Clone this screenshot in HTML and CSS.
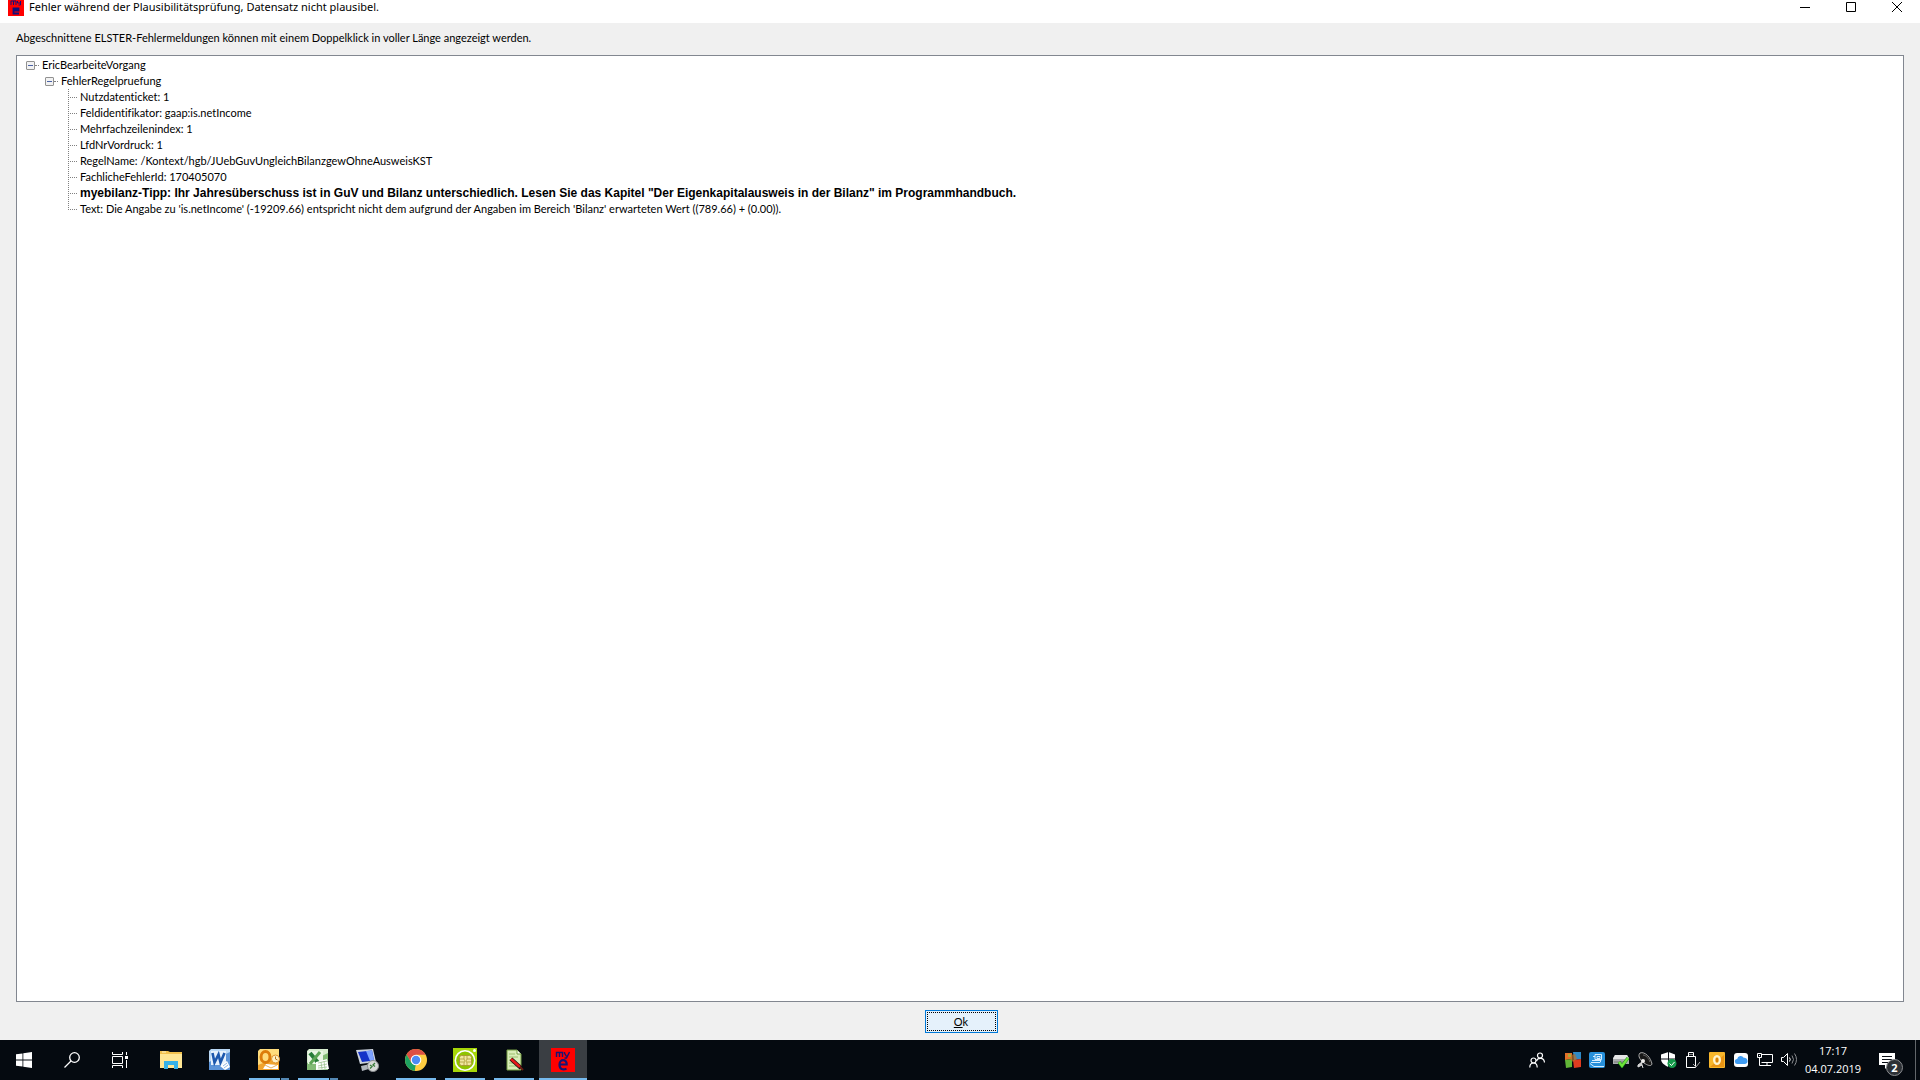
FILE: index.html
```html
<!DOCTYPE html>
<html lang="de">
<head>
<meta charset="utf-8">
<title>Fehler während der Plausibilitätsprüfung</title>
<link rel="stylesheet" href="styles.css">
</head>
<body>
<header class="titlebar">
  <svg class="app-icon" viewBox="0 0 16 16"><rect width="16" height="16" fill="#f00"/><g fill="none" stroke="#10107c"><path d="M3 5V1h5v4M5.500 1v4M9.500 1v2h3M12.500 1v4h-2" stroke-width="1"/><path d="M5.500 10.500h5v-2h-5v5h5.500" stroke-width="1.800"/></g></svg>
  <h1 class="title">Fehler während der Plausibilitätsprüfung, Datensatz nicht plausibel.</h1>
  <div class="controls">
    <button class="control" aria-label="Minimieren"><svg viewBox="0 0 10 10"><path d="M0 5.500h10"/></svg></button>
    <button class="control" aria-label="Maximieren"><svg viewBox="0 0 10 10"><path d="M.5.500h9v9h-9z"/></svg></button>
    <button class="control" aria-label="Schließen"><svg viewBox="0 0 10 10"><path d="M0 0l10 10M10 0L0 10"/></svg></button>
  </div>
</header>
<main class="dialog">
  <p class="hint">Abgeschnittene ELSTER-Fehlermeldungen können mit einem Doppelklick in voller Länge angezeigt werden.</p>
  <section class="tree">
    <ul class="level">
      <li>
        <div class="row"><button class="toggle" aria-label="Zuklappen"></button><span class="link"></span>EricBearbeiteVorgang</div>
        <ul class="level nested">
          <li>
            <div class="row"><button class="toggle" aria-label="Zuklappen"></button><span class="link"></span>FehlerRegelpruefung</div>
            <ul class="level leaves">
              <li class="row leaf">Nutzdatenticket: 1</li>
              <li class="row leaf">Feldidentifikator: gaap:is.netIncome</li>
              <li class="row leaf">Mehrfachzeilenindex: 1</li>
              <li class="row leaf">LfdNrVordruck: 1</li>
              <li class="row leaf">RegelName: /Kontext/hgb/JUebGuvUngleichBilanzgewOhneAusweisKST</li>
              <li class="row leaf">FachlicheFehlerId: 170405070</li>
              <li class="row leaf tip">myebilanz-Tipp: Ihr Jahresüberschuss ist in GuV und Bilanz unterschiedlich. Lesen Sie das Kapitel "Der Eigenkapitalausweis in der Bilanz" im Programmhandbuch.</li>
              <li class="row leaf">Text: Die Angabe zu 'is.netIncome' (-19209.66) entspricht nicht dem aufgrund der Angaben im Bereich 'Bilanz' erwarteten Wert ((789.66) + (0.00)).</li>
            </ul>
          </li>
        </ul>
      </li>
    </ul>
  </section>
  <div class="actions"><button class="ok"><span class="focus"><u>O</u>k</span></button></div>
</main>
<footer class="taskbar">
  <nav class="system">
    <button class="task" aria-label="Start"><svg width="16" height="16" viewBox="0 0 16 16" fill="#fff"><path d="M0 2.300l6.500-.9v6.200H0zM7.300 1.300L16 0v7.600H7.300zM0 8.400h6.500v6.200L0 13.700zM7.300 8.400H16V16l-8.700-1.200z"/></svg></button>
    <button class="task" aria-label="Suchen"><svg width="16" height="16" viewBox="0 0 16 16" fill="none" stroke="#fff" stroke-width="1.300"><circle cx="10.500" cy="5.500" r="4.800"/><path d="M7 9L.5 15.500"/></svg></button>
    <button class="task" aria-label="Taskansicht"><svg width="16" height="16" viewBox="0 0 16 16" fill="none" stroke="#fff"><path d="M.5 0v2.500h10V0M.5 4.500h10v7H.5zM.5 16v-2.500h10V16M14.500 0v3M14.500 8v8"/><path d="M13 4h3v3h-3z" fill="#fff" stroke="none"/></svg></button>
  </nav>
  <nav class="apps">
    <button class="task" aria-label="Explorer"><svg width="24" height="24" viewBox="0 0 24 24"><path d="M1 3h8l2 1h12v16H1z" fill="#f2c14e"/><path d="M1 6h22v14H1z" fill="#ffe694"/><path d="M3 4h4" stroke="#fff5c8"/><path d="M5 21v-8h14v8h-4v-4H9v4z" fill="#35b1e8"/></svg></button>
    <button class="task" aria-label="Word"><svg width="24" height="24" viewBox="0 0 24 24"><path d="M3 1h19v21H1V3z" fill="#b9d8f5"/><path d="M1 14L22 4v18H1z" fill="#5c94d8"/><path d="M3 3h15v14H3z" fill="#e6f1fc"/><path d="M4.500 5l2 9.500 4-8 2 8L16.500 5" fill="none" stroke="#1b57ad" stroke-width="2.600"/><path d="M12 18l7-5 3 6-5 3z" fill="#fff"/><path d="M15 18l4-3M16 20l4-3" stroke="#8db4e2"/></svg></button>
    <button class="task open stacked" aria-label="Outlook"><svg width="24" height="24" viewBox="0 0 24 24"><path d="M3 1h19v21H1V3z" fill="#ffdc7c"/><path d="M1 17L22 9v13H1z" fill="#f0a32c"/><ellipse cx="8.500" cy="9" rx="4.500" ry="5.500" fill="none" stroke="#dd7d0b" stroke-width="3"/><path d="M6 21l3-5 12 1v4z" fill="#fff"/><path d="M8 17l6 3 6-3" fill="none" stroke="#e7b15f"/><circle cx="18.500" cy="11" r="4" fill="#fff1c5" stroke="#e0942c"/><path d="M18.500 8.500V11l2 1" fill="none" stroke="#b9761a"/></svg></button>
    <button class="task open stacked" aria-label="Excel"><svg width="24" height="24" viewBox="0 0 24 24"><path d="M3 1h19v21H1V3z" fill="#d8edd0"/><path d="M1 15L22 5v17H1z" fill="#83bb76"/><path d="M2 3h15v13H2z" fill="#eaf6e5"/><path d="M4 5l10 12" stroke="#277d38" stroke-width="4"/><path d="M14 4L4 16" stroke="#5ba553" stroke-width="3"/><path d="M10 14l11-3 2 10-13 1z" fill="#fff"/><path d="M12 15l9-2M12 18l9-2M12 20l9-1M15 14l1 7M18 13l1 8" stroke="#9cc48f" stroke-width=".8"/></svg></button>
    <button class="task" aria-label="Remotedesktop"><svg width="24" height="24" viewBox="0 0 24 24"><path d="M1 2l17-1 3 13-16 2z" fill="#cbd2dd"/><path d="M3 4l14-1.500 2 10-12 1.500z" fill="#1532c8"/><path d="M11 3l6-.5 2 10-4 .5z" fill="#7da2ff"/><path d="M6 18l9-2 2 4-10 3z" fill="#b1b6be"/><circle cx="18" cy="18" r="5.500" fill="#d8dad9" stroke="#8b8e91"/><path d="M15 17l2 1.500-2 2M20 15l-2 2 2 1.500" fill="none" stroke="#397b39" stroke-width="1.300"/></svg></button>
    <button class="task open" aria-label="Chrome"><svg width="24" height="24" viewBox="0 0 24 24"><circle cx="12" cy="12" r="11" fill="#ffcd41"/><path d="M2.500 6.500A11 11 0 0 1 21.600 6.700H12L7.400 14.700z" fill="#dd5044"/><path d="M2.500 6.500L7.400 14.700 12 17.300l-1.200 5.600A11 11 0 0 1 2.500 6.500z" fill="#1da261"/><path d="M10.800 22.900L16.700 14.500l-5 3z" fill="#ffcd41"/><circle cx="12" cy="12" r="5.300" fill="#fff"/><circle cx="12" cy="12" r="4.200" fill="#4c8bf5"/></svg></button>
    <button class="task open" aria-label="Chipkarte"><svg width="24" height="24" viewBox="0 0 24 24"><path d="M0 0h24v24H0z" fill="#a6d608"/><circle cx="12" cy="12.500" r="9.700" fill="#8fc400" stroke="#fff" stroke-width="1.600"/><rect x="6.500" y="7.500" width="12" height="10" rx="2" fill="#f0e7a0" stroke="#a99c35"/><path d="M7 11h4M7 14h4M14 11h4M14 14h4M11 8v3l1 2-1 2v3M14 8v3l-1 2 1 2v3" fill="none" stroke="#a99c35" stroke-width=".8"/><circle cx="21.500" cy="2.500" r="1.500" fill="#fff"/></svg></button>
    <button class="task open" aria-label="Editor"><svg width="24" height="24" viewBox="0 0 24 24"><path d="M5 2h10l4 4v16H5z" fill="#d9edb8" stroke="#759d42"/><path d="M15 2v4h4" fill="#fff" stroke="#759d42"/><path d="M7 6h6M7 9h9M7 12h4M7 15h5M7 18h7" stroke="#9cc070"/><path d="M9 11l10 9" stroke="#111" stroke-width="4"/><path d="M9 11l9 8" stroke="#e81818" stroke-width="2.600"/><path d="M18 19l3 3" stroke="#6b1a12" stroke-width="2"/></svg></button>
    <button class="task open active" aria-label="myebilanz"><svg width="24" height="24" viewBox="0 0 24 24"><path d="M0 0h24v24H0z" fill="#f00"/><g fill="none" stroke="#171474"><path d="M5.500 9V4.500h6V9M8.500 4.500V9M13.500 4v1l2 3.500M18.500 4l-3 6h-2" stroke-width="1.400"/><path d="M8.500 16.500h7.200c.3-5.800-7.200-5.800-7.200 0 0 5 3.500 5.500 7 4.300" stroke-width="2.200"/></g></svg></button>
  </nav>
  <div class="tray">
    <svg class="people" viewBox="0 0 16 16" fill="none" stroke="#fff" stroke-width="1.200"><circle cx="11" cy="3.500" r="2.500"/><circle cx="4.500" cy="8.500" r="2.500"/><path d="M.8 15.500c0-6 7.400-6 7.400 0M7.500 9c1-3.500 7.500-4 8 1.500"/></svg>
    <svg viewBox="0 0 16 16"><path d="M0 1h7v6L0 8z" fill="#e37127"/><path d="M8 0h8v7l-7 1z" fill="#2f8ac5"/><path d="M0 8l7-1v8l-6 1z" fill="#62b638"/><path d="M8 8l8-1v8l-7 1z" fill="#df3c20"/><path d="M6 3l4-1 2 5-4 3-3-3z" fill="#b8702a" opacity=".7"/><path d="M3 2h3v3H3z" fill="#a8a83c"/></svg>
    <svg viewBox="0 0 16 16"><rect width="16" height="16" rx="2" fill="#268fda"/><path d="M6 2.500h6.500v5H6zM8 4.500h3v2H8zM4 4.500h2M3 8.500h9l-1 2H2M1 11.500l4 3h10" fill="none" stroke="#d4edff"/></svg>
    <svg viewBox="0 0 16 16"><path d="M2 3h12l2 3v6H0V6z" fill="#a9abad"/><path d="M2 3h12l2 4H0z" fill="#e5e5e6"/><path d="M1 10h12" stroke="#777"/><path d="M6 10l3 4 6-8" fill="none" stroke="#168f17" stroke-width="3.200"/><path d="M6 10l3 4 6-8" fill="none" stroke="#6fe13b" stroke-width="2.200"/></svg>
    <svg viewBox="0 0 16 16"><path d="M3 1c5-2 11 5 12 11-1 3-5 1-8-1S0 4 3 1z" fill="#171717" stroke="#aaa"/><path d="M6 3c3 0 6 4 7 7" fill="none" stroke="#666"/><circle cx="6" cy="9" r="2" fill="#eee"/><path d="M5 10l-4 3v2l4-2 1 3" fill="#ccc" stroke="#ddd"/></svg>
    <svg viewBox="0 0 16 16"><path d="M7.500 0L14 2.500v5c0 4-3 6-6.500 7.500C4 13.500 0 11 0 7V2.500z" fill="#fff"/><path d="M7.500 0v15M0 7h15" stroke="#0a0f16"/><circle cx="11" cy="11.500" r="4.500" fill="#159a4b"/><path d="M8.500 11.500l2 2 3-3.500" fill="none" stroke="#fff"/></svg>
    <svg viewBox="0 0 16 16" fill="none" stroke="#fff"><path d="M3.500 4.500V.5h5v4M1.500 4.500h9v11h-9zM5 2v1M7 2v1"/><path d="M8 12l3 3 4-5" stroke="#aaa"/></svg>
    <svg viewBox="0 0 16 16"><rect width="16" height="16" rx="1" fill="#f8b62b"/><path d="M1 15L15 3v12z" fill="#e99515"/><ellipse cx="8" cy="8" rx="3" ry="4" fill="#ffdc80" stroke="#fff3cf" stroke-width="2"/><ellipse cx="8" cy="8" rx="1.500" ry="2.500" fill="#d98009"/></svg>
    <svg viewBox="0 0 16 16"><rect x="1" y="1" width="14" height="14" rx="3" fill="#fff"/><path d="M4.500 12a2.500 2.500 0 0 1-.3-5 3.500 3.500 0 0 1 6.500-1.200A3 3 0 0 1 12 12z" fill="#3f9cf3"/></svg>
    <svg viewBox="0 0 16 16" fill="none" stroke="#fff"><path d="M5 2.500h10.500v8H4.500M.5 1.500h4v4h-4zM2.500 5.500v8h4M10 11v2.500M6 13.500h8M2 3.500h1"/></svg>
    <svg viewBox="0 0 16 16" fill="none" stroke="#fff"><path d="M.5 5.500h2l4-4v12l-4-4h-2zM8.500 5.500q1.500 2 0 4"/><path d="M11 3.500q3 4 0 8M13.500 1.500q4 6 0 12" stroke="#8b8d90"/></svg>
  </div>
  <div class="clock"><time>17:17</time><time>04.07.2019</time></div>
  <button class="notices" aria-label="Benachrichtigungen"><svg width="26" height="26" viewBox="0 0 26 26"><path d="M1 1h16v12h-6l-4 4v-4H1z" fill="#fff"/><path d="M4 4.500h10M4 7.500h10M4 10.500h7" stroke="#0a0f16"/></svg><span class="badge">2</span></button>
  <div class="peek"></div>
</footer>
</body>
</html>
```
FILE: styles.css
```css
* { box-sizing: border-box; }
body {
  margin: 0;
  min-height: 100vh;
  display: flex;
  flex-direction: column;
  background: #f0f0f0;
  color: #000;
  font-family: Lato, "Liberation Sans", Arial, sans-serif;
  font-size: 11px;
  font-variant-ligatures: none;
  line-height: 16px;
}
button { padding: 0; border: 0; background: none; font: inherit; color: inherit; }
ul { list-style: none; margin: 0; padding: 0; }
svg { display: block; flex: none; }

.titlebar { display: flex; height: 23px; padding-left: 8px; background: #fff; }
.app-icon { width: 16px; height: 16px; }
.title {
  flex: 1;
  margin: 0 0 0 5px;
  font: 11px/14px "Noto Sans", "Open Sans", sans-serif;
}
.controls { display: flex; }
.control { width: 46px; height: 14px; display: flex; align-items: center; justify-content: center; }
.control svg { width: 10px; height: 10px; fill: none; stroke: #000; }

.dialog { flex: 1; display: flex; flex-direction: column; padding: 7px 16px 0; }
.hint { margin: 0 0 9px; }
.tree { flex: 1; padding: 1px 0 0 9px; border: 1px solid #828790; background: #fff; }
.row { display: flex; align-items: center; height: 16px; white-space: pre; }
.toggle {
  width: 9px;
  height: 9px;
  border: 1px solid #919191;
  border-radius: 1px;
  background: linear-gradient(#4b63a7, #4b63a7) center / 5px 1px no-repeat, #f2f2f2;
}
.link { width: 4px; margin-right: 3px; border-top: 1px dotted #808080; }
.nested { padding-left: 19px; }
.leaves {
  margin-left: 23px;
  background: repeating-linear-gradient(#808080 0 1px, transparent 1px 2px) 0 0 / 1px calc(100% - 7px) no-repeat;
}
.leaf::before { content: ""; width: 9px; margin-right: 3px; border-top: 1px dotted #808080; }
.tip { font-family: "Liberation Sans", Arial, sans-serif; font-size: 12px; font-weight: bold; }
.actions { display: flex; justify-content: center; padding: 8px 0 7px 2px; }
.ok { width: 73px; height: 23px; padding: 1px; border: 1px solid #0078d7; outline: 0; background: #e5f1fb; }
.focus { display: flex; align-items: center; justify-content: center; height: 19px; border: 1px dotted #000; }

.taskbar { display: flex; height: 40px; background: #050a10; color: #fff; }
.system, .apps { display: flex; }
.apps { flex: 1; gap: 1px; margin-left: 3px; }
.task { display: flex; align-items: center; justify-content: center; width: 48px; height: 40px; }
.open { background: linear-gradient(#76b9ed, #76b9ed) center bottom / 40px 2px no-repeat; }
.stacked { background: linear-gradient(90deg, #76b9ed 31px, #050a10 31px 32px, #5488b4 32px) center bottom / 40px 2px no-repeat; }
.active { background: linear-gradient(#76b9ed, #76b9ed) center bottom / 48px 2px no-repeat, #3a3e43; }
.tray { display: flex; align-items: center; gap: 8px; }
.tray svg { width: 16px; height: 16px; }
.tray .people { margin-right: 12px; }
.clock {
  display: flex;
  flex-direction: column;
  align-items: center;
  width: 72px;
  padding-top: 2px;
  font: 11px/18px "Open Sans", "Noto Sans", sans-serif;
}
.notices { position: relative; width: 46px; padding: 10px 0 0 9px; }
.badge {
  position: absolute;
  left: 17px;
  top: 19px;
  width: 17px;
  height: 17px;
  border: 1px solid #8b8d90;
  border-radius: 50%;
  background: #2d3136;
  font: bold 11px/15px "Open Sans", sans-serif;
}
.peek { width: 5px; border-left: 1px solid #62666a; }
```
